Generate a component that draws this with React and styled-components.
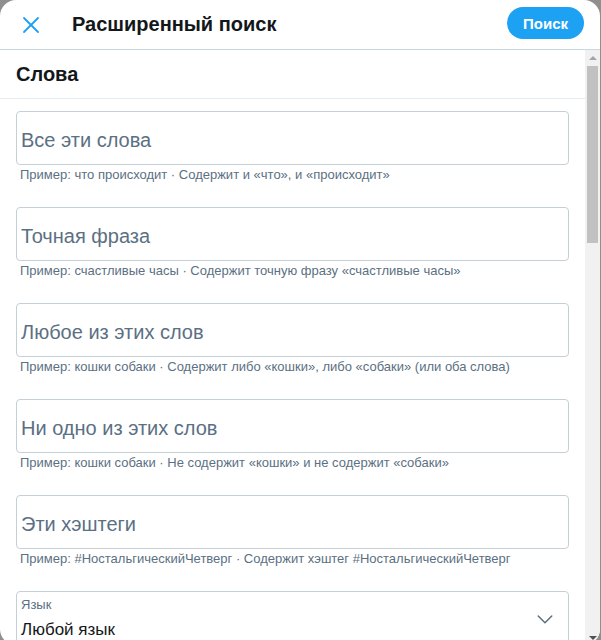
import React from "react";
import styled, { createGlobalStyle } from "styled-components";

const Global = createGlobalStyle`
  html, body { margin: 0; padding: 0; }
  body {
    background: #8f8f8f;
    font-family: "Liberation Sans", Arial, sans-serif;
    overflow: hidden;
  }
`;

const Modal = styled.div`
  width: 600px;
  height: 645px;
  background: #fff;
  border-radius: 16px;
  overflow: hidden;
  display: flex;
  flex-direction: column;
`;

const Header = styled.header`
  height: 49px;
  flex: 0 0 auto;
  display: flex;
  align-items: center;
  padding: 0 16px 0 14px;
  border-bottom: 1px solid #ccd6dd;
`;

const CloseButton = styled.button`
  width: 34px;
  height: 34px;
  border: none;
  background: transparent;
  padding: 0;
  display: flex;
  align-items: center;
  justify-content: center;
  color: #1da1f2;
  cursor: pointer;
`;

const Title = styled.h1`
  margin: 0 0 0 24px;
  font-size: 20px;
  font-weight: 700;
  color: #14171a;
  flex: 1;
`;

const PrimaryButton = styled.button`
  height: 32px;
  min-width: 77px;
  padding: 0 16px;
  border: none;
  border-radius: 999px;
  background: #1da1f2;
  color: #fff;
  font-family: inherit;
  font-weight: 700;
  font-size: 15px;
  margin-top: -3px;
`;

const Body = styled.div`
  flex: 1;
  min-height: 0;
  display: flex;
`;

const Content = styled.div`
  flex: 1;
  min-width: 0;
  overflow: hidden;
`;

const ScrollTrack = styled.div`
  width: 15px;
  flex: 0 0 15px;
  background: #f1f1f1;
  display: flex;
  flex-direction: column;
`;

const ScrollButton = styled.div`
  height: 15px;
  flex: 0 0 15px;
  display: flex;
  align-items: center;
  justify-content: center;
`;

const Arrow = styled.span`
  width: 0;
  height: 0;
  border-left: 4px solid transparent;
  border-right: 4px solid transparent;
  ${(p) =>
    p.$down
      ? "border-top: 4px solid #505050;"
      : "border-bottom: 4px solid #a3a3a3;"}
`;

const ThumbArea = styled.div`
  flex: 1;
  padding: 1px 2px 0;
`;

const Thumb = styled.div`
  height: 177px;
  background: #c1c1c1;
`;

const SectionTitle = styled.h2`
  margin: 0;
  height: 49px;
  box-sizing: border-box;
  display: flex;
  align-items: center;
  padding: 0 16px;
  font-size: 20px;
  font-weight: 700;
  color: #14171a;
  border-bottom: 1px solid #e6ecf0;
`;

const Field = styled.div`
  padding: 12px 16px;
`;

const InputBox = styled.input`
  display: block;
  width: 100%;
  box-sizing: border-box;
  height: 54px;
  border: 1px solid #c4cfd6;
  border-radius: 4px;
  padding: 4px 4px 0 4px;
  font-family: inherit;
  font-size: 20px;
  color: #14171a;
  outline: none;
  &::placeholder { color: #5b7083; }
`;

const Hint = styled.div`
  margin-top: 1px;
  padding-left: 4px;
  font-size: 13px;
  line-height: 17px;
  color: #5b7083;
`;

const SelectBox = styled.div`
  position: relative;
  height: 60px;
  box-sizing: border-box;
  border: 1px solid #c4cfd6;
  border-radius: 4px;
  padding: 5px 40px 0 4px;
`;

const SelectLabel = styled.div`
  font-size: 13px;
  line-height: 16px;
  color: #5b7083;
`;

const SelectValue = styled.div`
  margin-top: 7px;
  font-size: 17px;
  line-height: 20px;
  color: #14171a;
`;

const Chevron = styled.svg`
  position: absolute;
  right: 14px;
  top: 18px;
  color: #5b7083;
`;

const words = [
  ["Все эти слова", "Пример: что происходит · Содержит и «что», и «происходит»"],
  ["Точная фраза", "Пример: счастливые часы · Содержит точную фразу «счастливые часы»"],
  ["Любое из этих слов", "Пример: кошки собаки · Содержит либо «кошки», либо «собаки» (или оба слова)"],
  ["Ни одно из этих слов", "Пример: кошки собаки · Не содержит «кошки» и не содержит «собаки»"],
  ["Эти хэштеги", "Пример: #НостальгическийЧетверг · Содержит хэштег #НостальгическийЧетверг"],
];

const TextField = ({ placeholder, hint }) => (
  <Field>
    <InputBox placeholder={placeholder} />
    <Hint>{hint}</Hint>
  </Field>
);

const SelectField = ({ label, value }) => (
  <Field>
    <SelectBox>
      <SelectLabel>{label}</SelectLabel>
      <SelectValue>{value}</SelectValue>
      <Chevron width="18" height="18" viewBox="0 0 24 24" fill="none" stroke="currentColor" strokeWidth="2" strokeLinecap="round" strokeLinejoin="round">
        <polyline points="3 8 12 17 21 8" />
      </Chevron>
    </SelectBox>
  </Field>
);

export default function App() {
  return (
    <>
      <Global />
      <Modal>
        <Header>
          <CloseButton aria-label="Закрыть">
            <svg width="18" height="18" viewBox="0 0 18 18" stroke="currentColor" strokeWidth="1.8" strokeLinecap="round">
              <line x1="2" y1="2" x2="16" y2="16" />
              <line x1="16" y1="2" x2="2" y2="16" />
            </svg>
          </CloseButton>
          <Title>Расширенный поиск</Title>
          <PrimaryButton>Поиск</PrimaryButton>
        </Header>
        <Body>
          <Content>
            <SectionTitle>Слова</SectionTitle>
            {words.map(([p, h]) => (
              <TextField key={p} placeholder={p} hint={h} />
            ))}
            <SelectField label="Язык" value="Любой язык" />
          </Content>
          <ScrollTrack>
            <ScrollButton><Arrow /></ScrollButton>
            <ThumbArea><Thumb /></ThumbArea>
            <ScrollButton><Arrow $down /></ScrollButton>
          </ScrollTrack>
        </Body>
      </Modal>
    </>
  );
}
